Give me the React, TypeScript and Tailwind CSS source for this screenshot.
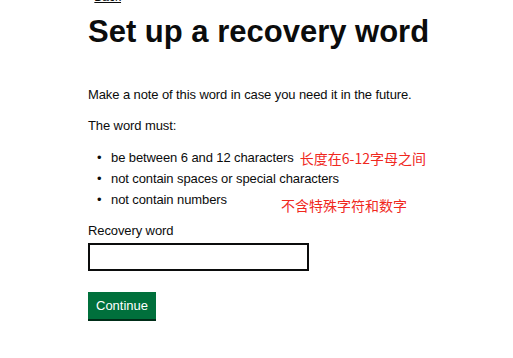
export default function App() {
  return (
    <div className="min-h-[358px] overflow-hidden bg-white font-['Liberation_Sans',Arial,sans-serif] text-[#0b0c0c]">
      <div className="px-[88px]">
        <a href="#" className="-mt-[10px] flex h-[14px] w-fit items-center gap-[3px] text-[12px] leading-[14px] text-[#0b0c0c]">
          <span className="text-[10px]">‹</span>
          <span className="underline">Back</span>
        </a>

        <h1 className="mt-[10px] whitespace-nowrap text-[31px] font-bold leading-[36px]">Set up a recovery word</h1>

        <p className="mt-[35px] whitespace-nowrap text-[13px] leading-[20px] tracking-[-0.1px]">Make a note of this word in case you need it in the future.</p>

        <p className="mt-[11px] text-[13px] leading-[20px] tracking-[-0.1px]">The word must:</p>

        <ul className="mt-[12px] flex flex-col gap-[1px] whitespace-nowrap text-[13px] leading-[20px] tracking-[-0.1px]">
          <li className="flex items-center">
            <span className="w-[23px] shrink-0 pl-[9px]">•</span>
            <span className="shrink-0">be between 6 and 12 characters</span>
            <span className="ml-[6px] shrink-0 font-['Noto_Sans_CJK_SC',sans-serif] text-[14px] tracking-normal text-[#f0281e]">长度在6-12字母之间</span>
          </li>
          <li className="flex items-center">
            <span className="w-[23px] shrink-0 pl-[9px]">•</span>
            <span>not contain spaces or special characters</span>
          </li>
          <li className="relative flex items-center">
            <span className="w-[23px] shrink-0 pl-[9px]">•</span>
            <span>not contain numbers</span>
            <span className="absolute left-[193px] top-[5px] font-['Noto_Sans_CJK_SC',sans-serif] text-[14px] leading-[20px] tracking-normal text-[#f0281e]">不含特殊字符和数字</span>
          </li>
        </ul>

        <label className="mt-[11px] block text-[13px] leading-[20px] tracking-[-0.1px]">Recovery word</label>
        <input type="text" className="mt-[2px] block h-[28px] w-[221px] border-2 border-[#0b0c0c] bg-white outline-none" />

        <button className="mt-[21px] block h-[27px] bg-[#00703c] px-[8px] text-[13px] leading-[26px] text-white shadow-[0_2px_0_#002d18]">Continue</button>
      </div>
    </div>
  );
}
